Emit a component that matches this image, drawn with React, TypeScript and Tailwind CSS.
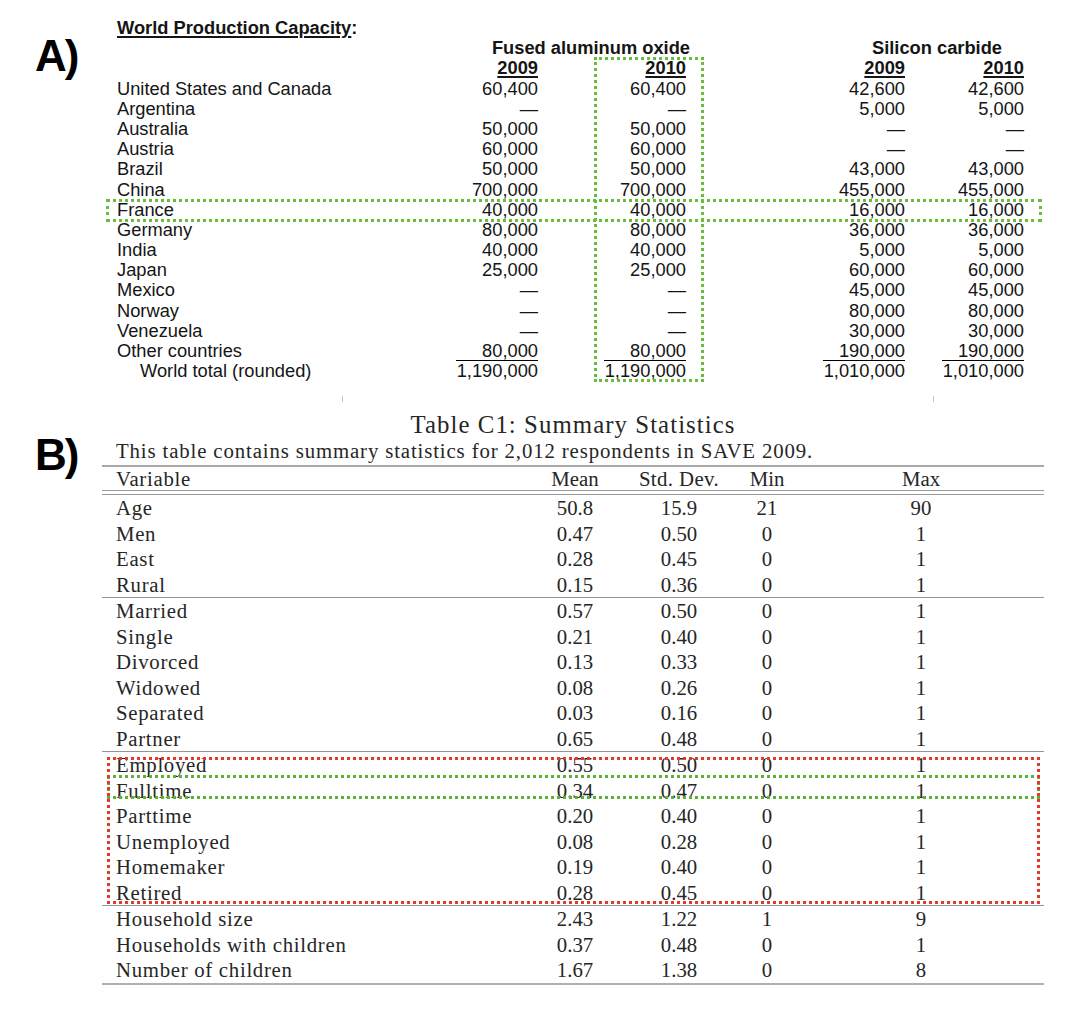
import { FC } from "react";

type ARow = { name: string; v: string[]; under?: boolean; indent?: boolean };

const aRows: ARow[] = [
  { name: "United States and Canada", v: ["60,400", "60,400", "42,600", "42,600"] },
  { name: "Argentina", v: ["—", "—", "5,000", "5,000"] },
  { name: "Australia", v: ["50,000", "50,000", "—", "—"] },
  { name: "Austria", v: ["60,000", "60,000", "—", "—"] },
  { name: "Brazil", v: ["50,000", "50,000", "43,000", "43,000"] },
  { name: "China", v: ["700,000", "700,000", "455,000", "455,000"] },
  { name: "France", v: ["40,000", "40,000", "16,000", "16,000"] },
  { name: "Germany", v: ["80,000", "80,000", "36,000", "36,000"] },
  { name: "India", v: ["40,000", "40,000", "5,000", "5,000"] },
  { name: "Japan", v: ["25,000", "25,000", "60,000", "60,000"] },
  { name: "Mexico", v: ["—", "—", "45,000", "45,000"] },
  { name: "Norway", v: ["—", "—", "80,000", "80,000"] },
  { name: "Venezuela", v: ["—", "—", "30,000", "30,000"] },
  { name: "Other countries", v: ["80,000", "80,000", "190,000", "190,000"], under: true },
  { name: "World total (rounded)", v: ["1,190,000", "1,190,000", "1,010,000", "1,010,000"], indent: true },
];

const bGroups: string[][][] = [
  [
    ["Age", "50.8", "15.9", "21", "90"],
    ["Men", "0.47", "0.50", "0", "1"],
    ["East", "0.28", "0.45", "0", "1"],
    ["Rural", "0.15", "0.36", "0", "1"],
  ],
  [
    ["Married", "0.57", "0.50", "0", "1"],
    ["Single", "0.21", "0.40", "0", "1"],
    ["Divorced", "0.13", "0.33", "0", "1"],
    ["Widowed", "0.08", "0.26", "0", "1"],
    ["Separated", "0.03", "0.16", "0", "1"],
    ["Partner", "0.65", "0.48", "0", "1"],
  ],
  [
    ["Employed", "0.55", "0.50", "0", "1"],
    ["Fulltime", "0.34", "0.47", "0", "1"],
    ["Parttime", "0.20", "0.40", "0", "1"],
    ["Unemployed", "0.08", "0.28", "0", "1"],
    ["Homemaker", "0.19", "0.40", "0", "1"],
    ["Retired", "0.28", "0.45", "0", "1"],
  ],
  [
    ["Household size", "2.43", "1.22", "1", "9"],
    ["Households with children", "0.37", "0.48", "0", "1"],
    ["Number of children", "1.67", "1.38", "0", "8"],
  ],
];

const bCols = "grid grid-cols-[425px_96px_112px_64px_244px]";

const TableA: FC = () => (
  <div className="relative w-[907px] font-['Liberation_Sans',Arial,sans-serif] text-[18.3px] leading-[20.2px] text-[#151515]">
    <div className="grid grid-cols-[323px_98px_148px_219px_119px] auto-rows-[20.2px]">
      <div className="col-span-5 font-bold whitespace-nowrap">
        <span className="underline decoration-2 underline-offset-[2px]">World Production Capacity</span>:
      </div>

      <div />
      <div className="col-span-2 flex justify-end mr-[-4px] font-bold whitespace-nowrap">Fused aluminum oxide</div>
      <div className="col-span-2 flex justify-end pr-[22px] font-bold whitespace-nowrap">Silicon carbide</div>

      <div />
      {["2009", "2010", "2009", "2010"].map((y, i) => (
        <div key={i} className="text-right font-bold">
          <span className="underline decoration-2 underline-offset-[2px]">{y}</span>
        </div>
      ))}

      {aRows.map((r) => (
        <div key={r.name} className="contents">
          <div className={`whitespace-nowrap ${r.indent ? "pl-[23px]" : ""}`}>{r.name}</div>
          {r.v.map((v, i) =>
            r.under ? (
              <div key={i} className="flex justify-end">
                <div className="w-[82px] text-right border-b border-black leading-[19.2px]">{v}</div>
              </div>
            ) : (
              <div key={i} className="text-right whitespace-nowrap">{v}</div>
            )
          )}
        </div>
      ))}
    </div>

    {/* highlight boxes */}
    <div className="absolute left-[477px] top-[39px] w-[110px] h-[325px] border-[3px] border-dotted border-[#68bd3c]" />
    <div className="absolute left-[-11px] top-[181px] w-[936px] h-[23px] border-[3px] border-dotted border-[#68bd3c]" />
  </div>
);

const TableB: FC = () => (
  <div className="relative w-[942px] font-['Liberation_Serif','Times_New_Roman',serif] text-[#262626]">
    <div className="text-center text-[24.8px] leading-[28px] tracking-[1.07px] whitespace-nowrap">
      Table C1: Summary Statistics
    </div>
    <div className="pl-[14px] text-[20.8px] leading-[24px] tracking-[0.87px] whitespace-nowrap">
      This table contains summary statistics for 2,012 respondents in SAVE 2009.
    </div>
    <div className="mt-[2px] h-[2px] bg-[#a8a8a8]" />
    <div className={`${bCols} h-[23px] text-[20.8px] leading-[23px]`}>
      <div className="pl-[14px] tracking-[0.7px]">Variable</div>
      <div className="flex justify-center whitespace-nowrap">Mean</div>
      <div className="flex justify-center whitespace-nowrap tracking-[0.4px]">Std. Dev.</div>
      <div className="flex justify-center whitespace-nowrap">Min</div>
      <div className="flex justify-center whitespace-nowrap">Max</div>
    </div>
    <div className="h-px bg-[#9a9a9a]" />
    <div className="h-[3px]" />
    <div className="h-px bg-[#9a9a9a]" />

    {bGroups.map((g, gi) => (
      <div key={gi}>
        {gi > 0 && <div className="h-px bg-[#949494]" />}
        {g.map((r) => (
          <div key={r[0]} className={`${bCols} h-[25.5px] text-[20.8px] leading-[25.5px]`}>
            <div className="pl-[14px] tracking-[0.7px] whitespace-nowrap">{r[0]}</div>
            {r.slice(1).map((v, i) => (
              <div key={i} className="flex justify-center">{v}</div>
            ))}
          </div>
        ))}
      </div>
    ))}
    <div className="h-[2px] bg-[#b0b0b0]" />

    {/* highlight boxes */}
    <div className="absolute left-[5px] top-[364px] w-[933px] h-[24px] border-[3px] border-dotted border-[#5bb336]" />
    <div className="absolute left-[5px] top-[346px] w-[933px] h-[147px] border-[3px] border-dotted border-[#e5392c]" />
  </div>
);

const App: FC = () => {
  return (
    <div className="w-[1076px] h-[1014px] bg-white overflow-hidden">
      <section className="flex pt-[18px]">
        <div className="w-[117px] pl-[35px] pt-[16px] font-['Liberation_Sans',Arial,sans-serif] font-bold text-[44px] leading-[44px] tracking-[-2px] text-black">
          A)
        </div>
        <TableA />
      </section>

      <div className="h-[30px] pt-[15px] flex">
        <div className="ml-[342px] w-px h-[6px] bg-[#c4c4c4]" />
        <div className="ml-[590px] w-px h-[6px] bg-[#c4c4c4]" />
      </div>

      <section className="flex">
        <div className="w-[102px] pl-[35px] pt-[22px] font-['Liberation_Sans',Arial,sans-serif] font-bold text-[44px] leading-[44px] tracking-[-2px] text-black">
          B)
        </div>
        <TableB />
      </section>
    </div>
  );
};

export default App;
